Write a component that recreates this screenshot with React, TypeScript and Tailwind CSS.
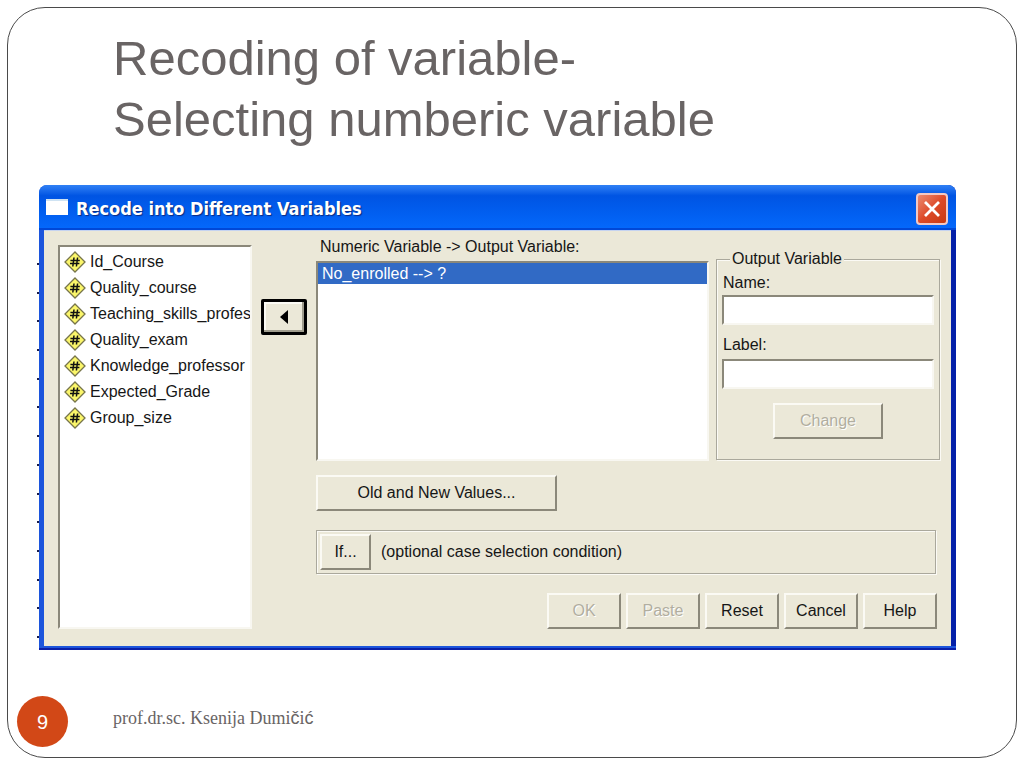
import React from 'react';
import clsx from 'clsx';

const VARIABLES = [
  'Id_Course',
  'Quality_course',
  'Teaching_skills_profes',
  'Quality_exam',
  'Knowledge_professor',
  'Expected_Grade',
  'Group_size',
];

const SUNKEN = 'bg-white border-2 border-t-[#8b887a] border-l-[#8b887a] border-r-[#f8f7f1] border-b-[#f8f7f1]';
const ETCHED = 'border border-[#aaa89c] shadow-[1px_1px_0_#fbfaf5,inset_1px_1px_0_#fbfaf5]';

interface DialogButtonProps {
  children: React.ReactNode;
  disabled?: boolean;
  className?: string;
}

const DialogButton: React.FC<DialogButtonProps> = ({ children, disabled, className }) => (
  <button
    type="button"
    disabled={disabled}
    className={clsx(
      'h-9 shrink-0 flex items-center justify-center border-2 border-t-[#fbfaf4] border-l-[#fbfaf4] border-r-[#8b887a] border-b-[#8b887a] bg-[#ebe8d8]',
      disabled && 'text-[#b1aea0] [text-shadow:1px_1px_0_#fff]',
      className
    )}
  >
    {children}
  </button>
);

// Yellow diamond that marks a numeric variable
const NumericIcon = () => (
  <svg width="22" height="22" viewBox="0 0 22 22" className="shrink-0" aria-hidden="true">
    <path d="M11 1 L21 11 L11 21 L1 11 Z" fill="#fbf66a" stroke="#77754a" strokeWidth="1.3" />
    <path d="M10 6.5 L8.8 15.5 M13.6 6.5 L12.4 15.5 M6.4 9.4 H15.8 M6 12.6 H15.4" stroke="#111" strokeWidth="1.5" fill="none" />
  </svg>
);

// Row marks of the data sheet that show past the left edge of the dialog
const SheetTicks = () => (
  <div className="w-0.5 shrink-0 flex flex-col justify-between pt-[78px] pb-3" aria-hidden="true">
    {Array.from({ length: 14 }, (_, i) => (
      <div key={i} className="h-0.5 bg-[#1b1d4a]" />
    ))}
  </div>
);

const TitleBar = () => (
  <div className="h-[45px] flex items-center justify-between pl-[7px] pr-2 rounded-t-lg bg-linear-to-b from-[#2f80f5] via-[#0054e3] via-25% to-[#0468fb] border-b-2 border-[#0048d8]">
    <div className="flex items-center gap-2">
      <div className="w-[22px] h-4 bg-white border-t-2 border-[#cfe3f3]" />
      <h2 className="pt-1 font-['DejaVu_Sans_Condensed','DejaVu_Sans',sans-serif] font-bold text-lg leading-6 text-white [text-shadow:1px_1px_1px_#0a2a80]">
        Recode into Different Variables
      </h2>
    </div>
    <button type="button" aria-label="Close" className="mt-1 size-8 flex items-center justify-center rounded-[4px] border-2 border-[#f3c9c4] bg-linear-to-br from-[#ea8a70] via-[#dd4a28] to-[#c8380f]">
      <svg width="20" height="20" viewBox="0 0 20 20" aria-hidden="true">
        <path d="M3 3 L17 17 M17 3 L3 17" stroke="#fff" strokeWidth="2.8" />
      </svg>
    </button>
  </div>
);

const RecodeDialog = () => (
  <section className="flex-1 min-w-0 rounded-t-lg bg-linear-to-r from-[#1c55dc] from-50% to-[#0420a8] to-50% font-['Liberation_Sans',Arial,sans-serif] text-base leading-5 text-[#161616]">
    <TitleBar />
    <div className="ml-[5px] mr-[5px] flex bg-[#ebe8d8] border-t border-[#c5d3f0] pt-3.5 pb-[17px] pl-3.5 pr-[11px]">
      <ul className={clsx('w-[194px] shrink-0 overflow-hidden py-0.5 pl-1', SUNKEN)}>
        {VARIABLES.map(name => (
          <li key={name} className="h-[26px] flex items-center gap-1 whitespace-nowrap">
            <NumericIcon />
            {name}
          </li>
        ))}
      </ul>

      <button
        type="button"
        aria-label="Move variable back"
        className="mt-[54px] mx-[9px] w-[46px] h-9 shrink-0 flex items-center justify-center rounded-[2px] border-[3px] border-black bg-[#ebe8d8] shadow-[inset_-2px_-2px_0_#a09d8e,inset_2px_2px_0_#fbfaf4]"
      >
        <svg width="8" height="14" viewBox="0 0 8 14" aria-hidden="true">
          <path d="M8 0 V14 L0 7 Z" fill="#000" />
        </svg>
      </button>

      <div className="flex-1 min-w-0 flex flex-col">
        <div className="flex gap-[7px] -mt-2">
          <div className="flex-1 min-w-0 flex flex-col">
            <div className="pl-1 pb-1">Numeric Variable -&gt; Output Variable:</div>
            <ul className={clsx('h-[200px]', SUNKEN)}>
              <li className="h-[21px] pl-1 pt-px bg-[#316ac5] text-white">No_enrolled --&gt; ?</li>
            </ul>
          </div>

          <fieldset className={clsx('mt-3 w-[224px] shrink-0 h-[211px] px-[5px] flex flex-col', ETCHED)}>
            <legend className="ml-2 px-0.5 bg-[#ebe8d8]">Output Variable</legend>
            <label htmlFor="out-name" className="mt-1 pl-px">Name:</label>
            <input id="out-name" type="text" className={clsx('mt-0.5 h-[30px] w-full px-1', SUNKEN)} />
            <label htmlFor="out-label" className="mt-2.5 pl-px">Label:</label>
            <input id="out-label" type="text" className={clsx('mt-1 h-[30px] w-full px-1', SUNKEN)} />
            <DialogButton disabled className="mt-3.5 w-[110px] self-center">Change</DialogButton>
          </fieldset>
        </div>

        <DialogButton className="mt-3.5 w-[241px]">Old and New Values...</DialogButton>

        <div className={clsx('mt-[19px] mr-1 h-11 flex items-center gap-2.5 pl-[3px]', ETCHED)}>
          <DialogButton className="w-[51px]">If...</DialogButton>
          <span>(optional case selection condition)</span>
        </div>

        <div className="mt-[19px] mr-[3px] flex justify-end gap-[5px]">
          <DialogButton disabled className="w-[74px]">OK</DialogButton>
          <DialogButton disabled className="w-[74px]">Paste</DialogButton>
          <DialogButton className="w-[74px]">Reset</DialogButton>
          <DialogButton className="w-[74px]">Cancel</DialogButton>
          <DialogButton className="w-[74px]">Help</DialogButton>
        </div>
      </div>
    </div>
    <div className="h-1 border-b-2 border-[#0a1fa8] bg-[#1c55dc]" />
  </section>
);

const App: React.FC = () => (
  <main className="min-h-screen flex bg-white pt-[7px] px-[7px] pb-[10px]">
    <div className="flex-1 min-w-0 flex flex-col rounded-[38px] border border-[#4a4a4a]">
      <h1 className="pt-5 pl-[105px] font-['Liberation_Sans',Arial,sans-serif] text-[49px] leading-[61px] text-[#696464]">
        Recoding of variable-
        <br />
        Selecting numberic variable
      </h1>

      <div className="mt-[35px] ml-[29px] mr-[60px] flex">
        <SheetTicks />
        <RecodeDialog />
      </div>

      <footer className="mt-auto pl-[9px] pb-2.5 flex items-center gap-[45px]">
        <div className="size-[51px] rounded-full bg-[#d24817] flex items-center justify-center font-['Liberation_Sans',Arial,sans-serif] text-xl text-white">
          9
        </div>
        <p className="pb-2 font-['Liberation_Serif',serif] text-lg text-[#696464]">
          prof.dr.sc. Ksenija Dumi<span className="font-['Liberation_Sans',sans-serif]">č</span>i
          <span className="font-['Liberation_Sans',sans-serif]">ć</span>
        </p>
      </footer>
    </div>
  </main>
);

export default App;
